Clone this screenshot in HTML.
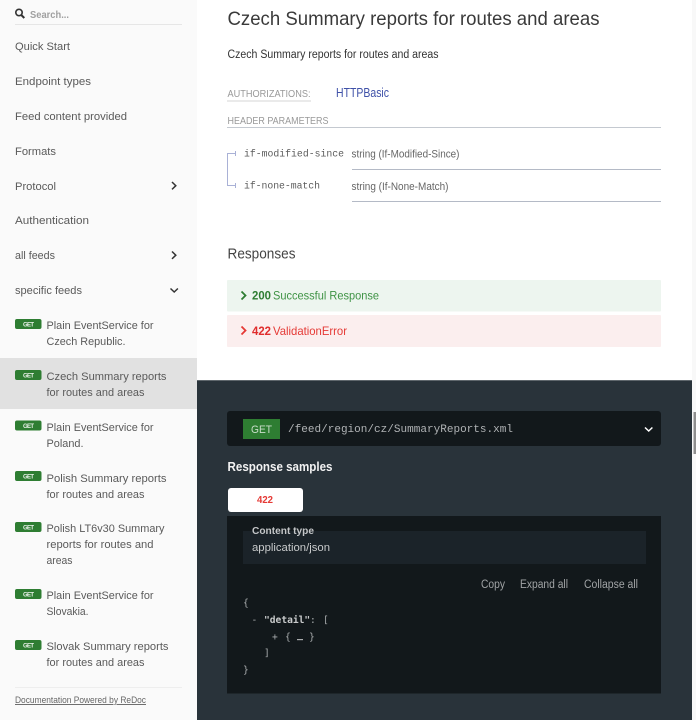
<!DOCTYPE html>
<html><head><meta charset="utf-8"><title>Czech Summary reports</title>
<style>
html,body{margin:0;padding:0;width:696px;height:720px;overflow:hidden;background:#fff}
svg{display:block}
text{font-family:"Liberation Sans",sans-serif;white-space:pre}
.s{font-size:11px;fill:#5a5a5a}
.m{font-family:"Liberation Mono",monospace}
.d{font-family:"DejaVu Sans Mono",monospace;font-size:9.6px}
</style></head><body>
<svg width="696" height="720" viewBox="0 0 696 720" xmlns="http://www.w3.org/2000/svg">
<rect width="696" height="720" fill="#fff"/>
<rect width="197" height="720" fill="#fafafa"/>
<rect x="692" width="4" height="720" fill="#f8f8f8"/>
<rect x="693.500" y="412" width="2.500" height="42" fill="#8f8f8f"/>
<!-- sidebar -->
<circle cx="19" cy="12.500" r="3.200" fill="none" stroke="#333" stroke-width="1.600"/>
<path d="M21.300 15l3 3" stroke="#333" stroke-width="2"/>
<text x="30" y="18" font-size="10.500" font-weight="bold" fill="#a0a0a0" textLength="39" lengthAdjust="spacingAndGlyphs">Search...</text>
<rect x="15" y="24" width="167" height="1" fill="#e6e6e6"/>
<text class="s" x="15" y="50" textLength="55" lengthAdjust="spacingAndGlyphs">Quick Start</text>
<text class="s" x="15" y="85" textLength="76" lengthAdjust="spacingAndGlyphs">Endpoint types</text>
<text class="s" x="15" y="120" textLength="112" lengthAdjust="spacingAndGlyphs">Feed content provided</text>
<text class="s" x="15" y="155" textLength="41" lengthAdjust="spacingAndGlyphs">Formats</text>
<text class="s" x="15" y="190" textLength="41" lengthAdjust="spacingAndGlyphs">Protocol</text>
<text class="s" x="15" y="224" textLength="74" lengthAdjust="spacingAndGlyphs">Authentication</text>
<text class="s" x="15" y="259" textLength="40" lengthAdjust="spacingAndGlyphs">all feeds</text>
<text class="s" x="15" y="294" textLength="67" lengthAdjust="spacingAndGlyphs">specific feeds</text>
<g fill="none" stroke="#333" stroke-width="1.500">
<path d="M172 182l3.800 3.700-3.800 3.700"/>
<path d="M172 251.500l3.800 3.700-3.800 3.700"/>
<path d="M170.500 288.500l3.700 3.500 3.700-3.500"/>
</g>
<rect y="358" width="197" height="51" fill="#e1e1e1"/>
<g fill="#2e7d32">
<rect x="15" y="319" width="26.500" height="10" rx="2"/>
<rect x="15" y="370" width="26.500" height="10" rx="2"/>
<rect x="15" y="420.500" width="26.500" height="10" rx="2"/>
<rect x="15" y="471" width="26.500" height="10" rx="2"/>
<rect x="15" y="522" width="26.500" height="10" rx="2"/>
<rect x="15" y="589" width="26.500" height="10" rx="2"/>
<rect x="15" y="640" width="26.500" height="10" rx="2"/>
</g>
<g font-size="6" font-weight="bold" fill="#e8f0e8">
<text x="23" y="326.300" textLength="11">GET</text>
<text x="23" y="377.300" textLength="11">GET</text>
<text x="23" y="427.800" textLength="11">GET</text>
<text x="23" y="478.300" textLength="11">GET</text>
<text x="23" y="529.300" textLength="11">GET</text>
<text x="23" y="596.300" textLength="11">GET</text>
<text x="23" y="647.300" textLength="11">GET</text>
</g>
<text class="s" x="46.500" y="329" textLength="107" lengthAdjust="spacingAndGlyphs">Plain EventService for</text>
<text class="s" x="46.500" y="345" textLength="79" lengthAdjust="spacingAndGlyphs">Czech Republic.</text>
<text class="s" x="46.500" y="380" textLength="120" lengthAdjust="spacingAndGlyphs">Czech Summary reports</text>
<text class="s" x="46.500" y="396" textLength="98" lengthAdjust="spacingAndGlyphs">for routes and areas</text>
<text class="s" x="46.500" y="431" textLength="107" lengthAdjust="spacingAndGlyphs">Plain EventService for</text>
<text class="s" x="46.500" y="447" textLength="37" lengthAdjust="spacingAndGlyphs">Poland.</text>
<text class="s" x="46.500" y="482" textLength="120" lengthAdjust="spacingAndGlyphs">Polish Summary reports</text>
<text class="s" x="46.500" y="498" textLength="98" lengthAdjust="spacingAndGlyphs">for routes and areas</text>
<text class="s" x="46.500" y="532" textLength="118" lengthAdjust="spacingAndGlyphs">Polish LT6v30 Summary</text>
<text class="s" x="46.500" y="548" textLength="107" lengthAdjust="spacingAndGlyphs">reports for routes and</text>
<text class="s" x="46.500" y="564" textLength="26" lengthAdjust="spacingAndGlyphs">areas</text>
<text class="s" x="46.500" y="599" textLength="107" lengthAdjust="spacingAndGlyphs">Plain EventService for</text>
<text class="s" x="46.500" y="615" textLength="42" lengthAdjust="spacingAndGlyphs">Slovakia.</text>
<text class="s" x="46.500" y="650" textLength="122" lengthAdjust="spacingAndGlyphs">Slovak Summary reports</text>
<text class="s" x="46.500" y="666" textLength="98" lengthAdjust="spacingAndGlyphs">for routes and areas</text>
<rect x="15" y="687" width="167" height="1" fill="#eee"/>
<text x="15" y="703" font-size="9.500" fill="#666" text-decoration="underline" textLength="131" lengthAdjust="spacingAndGlyphs">Documentation Powered by ReDoc</text>
<!-- main -->
<text x="227.500" y="25" font-size="19.500" fill="#3a3a3a" textLength="372" lengthAdjust="spacingAndGlyphs">Czech Summary reports for routes and areas</text>
<text x="227.500" y="58" font-size="11.500" fill="#333" textLength="211" lengthAdjust="spacingAndGlyphs">Czech Summary reports for routes and areas</text>
<text x="227.500" y="97" font-size="10.500" fill="#999" textLength="83" lengthAdjust="spacingAndGlyphs">AUTHORIZATIONS:</text>
<rect x="227" y="100.500" width="84" height="1" fill="#d4d4d4"/>
<text x="336" y="97" font-size="12.500" fill="#3f51a8" textLength="53" lengthAdjust="spacingAndGlyphs">HTTPBasic</text>
<text x="227.500" y="124" font-size="10.500" fill="#999" textLength="101" lengthAdjust="spacingAndGlyphs">HEADER PARAMETERS</text>
<rect x="227" y="127" width="434" height="1" fill="#c4c9d0"/>
<path d="M236 153.500H227.500V185.500H236M235.500 151v5M235.500 183v5" fill="none" stroke="#a9b1d6" stroke-width="1"/>
<text class="m" x="244" y="156.500" font-size="9.800" fill="#5c5c5c" textLength="100">if-modified-since</text>
<text class="m" x="244" y="188.500" font-size="9.800" fill="#5c5c5c" textLength="76">if-none-match</text>
<text x="351.500" y="157.500" font-size="11" fill="#666" textLength="108" lengthAdjust="spacingAndGlyphs">string (If-Modified-Since)</text>
<text x="351.500" y="190" font-size="11" fill="#666" textLength="97" lengthAdjust="spacingAndGlyphs">string (If-None-Match)</text>
<rect x="352" y="169" width="309" height="1" fill="#b4bac6"/>
<rect x="352" y="201" width="309" height="1" fill="#b4bac6"/>
<text x="227.500" y="258.500" font-size="15" fill="#444" textLength="68" lengthAdjust="spacingAndGlyphs">Responses</text>
<rect x="227" y="280" width="434" height="31.500" rx="1" fill="#edf5ef"/>
<rect x="227" y="315" width="434" height="32" rx="1" fill="#fbeeee"/>
<path d="M241.500 291.500l4 4-4 4" fill="none" stroke="#2e7d32" stroke-width="1.800"/>
<path d="M241.500 326.500l4 4-4 4" fill="none" stroke="#e53935" stroke-width="1.800"/>
<text x="252" y="299.500" font-size="11.500" font-weight="bold" fill="#2e7d32" textLength="19" lengthAdjust="spacingAndGlyphs">200</text>
<text x="273" y="299.500" font-size="12" fill="#3f9345" textLength="106" lengthAdjust="spacingAndGlyphs">Successful Response</text>
<text x="252" y="335" font-size="11.500" font-weight="bold" fill="#e02c2c" textLength="19" lengthAdjust="spacingAndGlyphs">422</text>
<text x="273" y="335" font-size="12" fill="#e53935" textLength="74" lengthAdjust="spacingAndGlyphs">ValidationError</text>
<!-- dark pane -->
<rect x="197" y="380" width="495" height="340" fill="#29333a"/>
<rect x="197" y="380" width="495" height="1" fill="#5f676c"/>
<rect x="227" y="411" width="434" height="35" rx="3" fill="#12181b"/>
<rect x="243" y="419" width="37" height="20" fill="#2e7d32"/>
<text x="251" y="433" font-size="11" fill="#c9ddca" textLength="21" lengthAdjust="spacingAndGlyphs">GET</text>
<text class="m" x="288" y="432" font-size="11" fill="#b0b3b5" textLength="225">/feed/region/cz/SummaryReports.xml</text>
<path d="M645 427.500l3.700 3.500 3.700-3.500" fill="none" stroke="#fff" stroke-width="1.500"/>
<text x="227.500" y="471" font-size="12.500" font-weight="bold" fill="#f2f2f2" textLength="105" lengthAdjust="spacingAndGlyphs">Response samples</text>
<rect x="228" y="488" width="75" height="24" rx="3" fill="#fff"/>
<text x="257" y="503" font-size="10" font-weight="bold" fill="#e53935" textLength="16" lengthAdjust="spacingAndGlyphs">422</text>
<rect x="227" y="516" width="434" height="177.500" fill="#12181b"/>
<rect x="243" y="531" width="403" height="33" fill="#1b2329"/>
<text x="252" y="534" font-size="10" font-weight="bold" fill="#c4c6c8" textLength="62" lengthAdjust="spacingAndGlyphs">Content type</text>
<text x="252" y="551" font-size="11" fill="#c8cacb" textLength="78" lengthAdjust="spacingAndGlyphs">application/json</text>
<g font-size="11.500" fill="#a0a3a5">
<text x="481" y="588" textLength="24" lengthAdjust="spacingAndGlyphs">Copy</text>
<text x="520" y="588" textLength="48" lengthAdjust="spacingAndGlyphs">Expand all</text>
<text x="584" y="588" textLength="54" lengthAdjust="spacingAndGlyphs">Collapse all</text>
</g>
<g fill="#a8abad">
<text class="d" x="243" y="606">{</text>
<text class="d" x="251.500" y="623">-</text>
<text class="d" x="264" y="623" font-weight="bold" fill="#c8cacb">"detail"</text>
<text class="d" x="310" y="623">:</text>
<text class="d" x="323" y="623">[</text>
<text class="d" x="272" y="640">+</text>
<text class="d" x="285" y="640">{</text>
<rect x="297" y="639" width="6" height="1.200"/>
<text class="d" x="309" y="640">}</text>
<text class="d" x="264" y="656">]</text>
<text class="d" x="243" y="673">}</text>
</g>
</svg>
</body></html>
